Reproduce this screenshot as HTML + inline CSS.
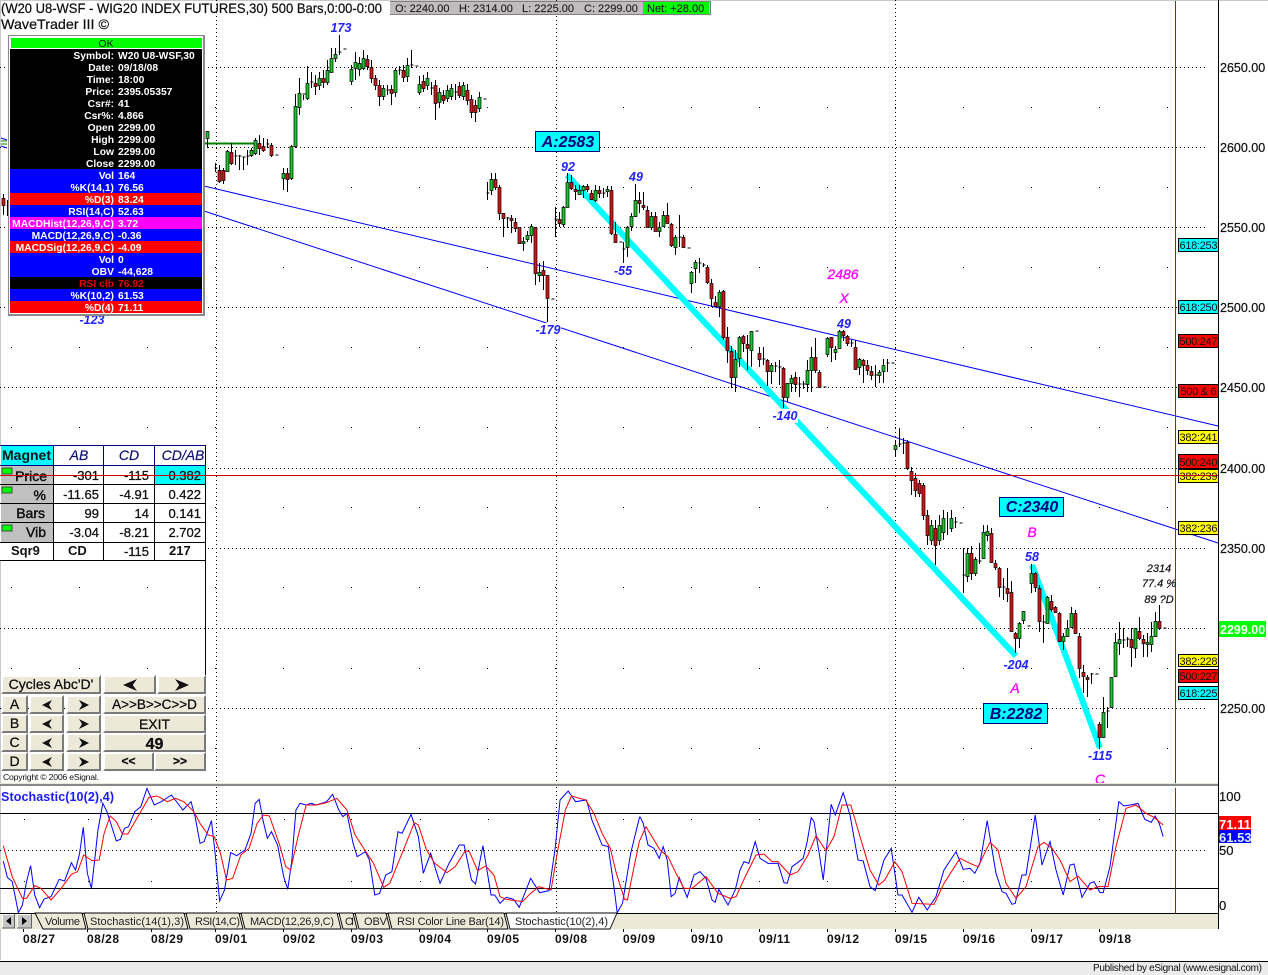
<!DOCTYPE html>
<html><head><meta charset="utf-8"><title>WaveTrader chart</title>
<style>
html,body{margin:0;padding:0;background:#fff;width:1268px;height:975px;overflow:hidden}
svg{position:absolute;left:0;top:0}
text{font-family:"Liberation Sans",Arial,sans-serif}
.b{position:absolute;box-sizing:border-box;background:#ece9d8;border:2px solid;border-color:#fff #7a7a7a #7a7a7a #fff;font:14px "Liberation Sans",Arial,sans-serif;color:#111;text-align:center;white-space:nowrap;-webkit-text-stroke:.3px #111}
.b svg{position:static;display:block;margin:0 auto}
.p text{font-size:10.3px;font-weight:bold;fill:#fff}
.lb{font-style:italic;font-size:12.5px;fill:#2222ff;text-anchor:middle;font-weight:bold}
.mg{font-style:italic;font-size:14px;fill:#ff00ff;stroke:#ff00ff;stroke-width:.3px;text-anchor:middle}
.ax{font-size:12.5px;fill:#111;stroke:#111;stroke-width:.2px}
.fb{font-size:11px;fill:#111;text-anchor:middle}
.d{font-size:12px;font-weight:bold;fill:#111}
.tb{font-size:11px;fill:#222}
.tv{font-size:13px;fill:#111;text-anchor:end;stroke:#111;stroke-width:.3px}
.tl{font-size:14px;fill:#111;text-anchor:end;stroke:#111;stroke-width:.45px}
.th{font-size:14px;font-style:italic;fill:#111177;stroke:#111177;stroke-width:.2px;text-anchor:middle}
.box{font-size:16px;font-weight:bold;font-style:italic;fill:#000080;text-anchor:middle}
.k{font-size:11px;font-style:italic;fill:#111;stroke:#111;stroke-width:.2px;text-anchor:middle}
</style></head><body>
<svg width="1268" height="975" viewBox="0 0 1268 975" xmlns="http://www.w3.org/2000/svg">
<rect width="1268" height="975" fill="#fff"/>
<rect width="1268" height="1" fill="#c8c8c8"/>
<rect width="1" height="960" fill="#c8c8c8"/>

<!-- grid -->
<path d="M0 67.5H1208M0 147.5H1208M0 227.5H1208M0 307.5H1208M0 387.5H1208M0 468.5H1208M0 548.5H1208M0 628.5H1208M0 708.5H1208" stroke="#000" stroke-dasharray="1 3" fill="none"/>
<path d="M216.5 0V784M556.5 0V784M895.5 0V784" stroke="#000" stroke-dasharray="1 3" fill="none"/>
<path d="M11 107.5H1170M11 187.5H1170M11 267.5H1170M11 347.5H1170M11 427.5H1170M11 507.5H1170M11 587.5H1170M11 668.5H1170M11 748.5H1170" stroke="#000" stroke-dasharray="1 67" fill="none"/>

<!-- trend lines -->
<path d="M204 186L1218 426M204 211L1218 543" stroke="#0000ff" fill="none"/>
<path d="M204 143.5H254" stroke="#008000" stroke-width="2" fill="none"/>
<path d="M1 141H7M1 144H7" stroke="#008000" fill="none"/><path d="M1 138L7 140M1 146L7 148" stroke="#0000ff" fill="none"/>

<!-- cyan wave lines -->
<path d="M567 175L1016 656M1032 565L1100 748" stroke="#00ffff" stroke-width="6" fill="none"/>
<rect x="772" y="409" width="26" height="14" fill="#fff"/>
<rect x="535" y="323" width="26" height="14" fill="#fff"/>

<!-- wicks -->
<g transform="translate(.5,0)"><path stroke="#000" fill="none" d="M3 194V215M7 200V216M207 131V148M215 163V172M214 168h3M219 165V183M223 168V184M227 150V172M231 143V165M235 150V165M234 156h3M239 155V170M238 156h3M243 157V170M242 157h3M247 150V165M246 156h3M251 148V157M255 138V155M259 135V155M263 138V152M267 139V148M266 144h3M271 143V157M275 155h3M283 168V190M287 168V192M291 145V180M295 94V148M299 78V115M303 95V100M302 94h3M307 66V100M311 72V88M310 82h3M315 75V95M319 72V90M323 70V88M327 60V85M331 48V72M335 48V62M339 35V55M338 52h3M343 49h3M351 65V85M355 52V80M359 57V76M363 50V70M367 55V70M371 60V83M375 75V90M379 80V106M383 85V100M387 85V95M386 90h3M391 85V105M395 68V97M399 66V75M398 70h3M403 65V82M407 58V82M411 50V68M410 65h3M415 66h3M419 76V95M423 75V92M427 72V90M431 82V95M430 88h3M435 80V120M439 88V108M443 90V104M447 85V102M451 84V100M455 84V100M454 92h3M459 82V98M463 82V100M467 84V105M471 95V118M475 100V122M479 92V112M483 99h3"/>
<path stroke="#000" fill="none" d="M487 182V200M486 193h3M491 173V195M495 173V190M499 185V220M503 213V237M507 217V228M506 218h3M511 215V233M515 218V232M519 228V243M523 237V251M527 231V242M531 224V243M535 227V285M539 263V282M543 261V290M547 275V322M551 299h3M555 207V237M554 219h3M559 212V227M563 206V227M567 173V207M571 175V190M575 185V200M579 185V195M583 185V198M587 184V192M591 190V200M595 185V202M599 186V198M603 188V198M602 193h3M607 186V197M611 186V235M615 222V242M619 242h3M623 242V263M622 249h3M627 226V257M631 213V231M635 184V217M639 192V213M643 192V210M647 206V227M651 212V230M655 212V231M659 222V237M663 211V227M667 203V223M671 223V247M675 235V255M679 215V247M678 237h3M683 235V248M687 248h3M691 271V293M695 260V283M699 258V273M698 263h3M703 263V267M702 265h3M707 265V284M711 279V307M715 296V307M719 290V317M723 290V340M727 327V363M731 346V388M735 350V392M739 336V367M743 335V352M747 335V370M751 331V367M755 331h3M759 347V367M763 347V365M762 359h3M767 359V386M771 363V384M775 362V372M774 366h3M779 360V385M778 367h3M783 367V408M787 383V402M791 375V392M795 372V392M799 377V397M798 384h3M803 381V389M802 384h3M807 360V392M811 347V392M815 338V373M819 370V387M823 387h3M827 337V357M831 337V362M835 346V360M839 330V349M843 330V341M847 335V346M851 340V347M850 343h3M855 340V370M859 358V375M863 359V383M867 360V375M871 366V380M875 365V387M874 375h3M879 370V383M883 359V383M887 359V372M886 363h3M891 363h3"/>
<path stroke="#000" fill="none" d="M895 440V457M899 428V447M898 444h3M903 438V454M902 443h3M907 440V470M911 467V495M915 473V497M919 480V497M923 483V520M927 510V545M931 520V545M935 520V565M939 515V545M943 510V540M947 512V535M951 510V532M955 517V528M954 522h3M959 523h3M963 548V593M962 575h3M967 548V582M971 546V580M975 557V576M979 543V564M978 561h3M983 525V559M987 525V541M991 528V563M995 560V570M999 567V597M1003 578V600M1002 587h3M1007 568V602M1011 581V632M1015 632V653M1019 622V648M1023 611V624M1027 626h3M1031 564V593M1035 572V592M1039 585V632M1043 615V643M1042 622h3M1047 596V623M1051 595V612M1055 606V613M1059 612V642M1063 633V650M1067 620V637M1071 607V628M1075 610V634M1079 633V678M1083 665V693M1087 675V697M1091 673V684M1090 674h3M1095 674h3M1099 722V748M1103 697V738M1107 707V728M1106 711h3M1111 677V708M1115 633V677M1119 622V655M1123 628V648M1122 640h3M1127 637V647M1126 639h3M1131 628V667M1135 628V658M1139 617V640M1143 635V657M1147 633V657M1151 622V652M1155 612V637M1159 605V630M1163 628h3"/></g>

<!-- green bodies -->
<g transform="translate(-1,.5)" stroke-width=".7"><path stroke="#000" fill="#11cc22" d="M207 131h3V138h-3zM227 151h3V171h-3zM251 150h3V155h-3zM255 140h3V153h-3zM283 173h3V178h-3zM291 146h3V178h-3zM295 106h3V146h-3zM299 93h3V107h-3zM307 83h3V98h-3zM319 78h3V85h-3zM327 70h3V82h-3zM331 58h3V72h-3zM335 54h3V58h-3zM351 69h3V81h-3zM355 62h3V68h-3zM359 63h3V69h-3zM363 58h3V68h-3zM383 88h3V96h-3zM395 70h3V92h-3zM407 65h3V76h-3zM419 84h3V92h-3zM427 78h3V85h-3zM439 92h3V102h-3zM447 90h3V98h-3zM451 88h3V96h-3zM463 85h3V96h-3zM479 97h3V108h-3zM491 179h3V190h-3zM523 241h3V243h-3zM527 235h3V239h-3zM531 226h3V235h-3zM539 272h3V275h-3zM563 207h3V224h-3zM567 182h3V207h-3zM579 190h3V194h-3zM583 186h3V190h-3zM595 190h3V200h-3zM607 189h3V191h-3zM627 227h3V247h-3zM631 216h3V226h-3zM635 200h3V216h-3zM651 216h3V227h-3zM659 227h3V231h-3zM663 215h3V226h-3zM675 237h3V247h-3zM691 272h3V283h-3zM695 262h3V268h-3zM719 292h3V306h-3zM735 359h3V377h-3zM739 337h3V358h-3zM751 331h3V350h-3zM771 365h3V371h-3zM787 383h3V397h-3zM791 378h3V383h-3zM807 370h3V384h-3zM811 357h3V370h-3zM827 338h3V354h-3zM835 349h3V352h-3zM839 331h3V348h-3zM859 359h3V367h-3zM879 372h3V375h-3zM883 365h3V371h-3zM895 445h3V449h-3zM931 525h3V540h-3zM939 525h3V540h-3zM943 518h3V532h-3zM951 518h3V528h-3zM967 553h3V576h-3zM975 559h3V573h-3zM983 532h3V558h-3zM987 531h3V535h-3zM1019 623h3V638h-3zM1023 611h3V620h-3zM1031 573h3V583h-3zM1047 597h3V623h-3zM1063 636h3V641h-3zM1067 628h3V636h-3zM1071 613h3V627h-3zM1103 712h3V737h-3zM1111 677h3V707h-3zM1115 642h3V676h-3zM1119 639h3V643h-3zM1135 628h3V648h-3zM1147 642h3V644h-3zM1151 636h3V644h-3zM1155 621h3V636h-3z"/>
<!-- red bodies -->
<path stroke="#000" fill="#dd1111" d="M3 198h3V205h-3zM219 170h3V181h-3zM223 170h3V180h-3zM231 152h3V163h-3zM259 143h3V148h-3zM263 146h3V150h-3zM271 145h3V155h-3zM287 173h3V179h-3zM315 83h3V86h-3zM323 78h3V82h-3zM367 59h3V66h-3zM371 67h3V78h-3zM375 78h3V85h-3zM379 85h3V96h-3zM391 89h3V93h-3zM403 70h3V77h-3zM423 81h3V88h-3zM435 85h3V103h-3zM443 95h3V100h-3zM459 86h3V95h-3zM467 90h3V100h-3zM471 99h3V112h-3zM475 105h3V112h-3zM495 179h3V187h-3zM499 187h3V213h-3zM503 213h3V218h-3zM511 218h3V220h-3zM515 222h3V228h-3zM519 227h3V243h-3zM535 227h3V273h-3zM543 270h3V275h-3zM547 275h3V298h-3zM559 219h3V223h-3zM571 182h3V188h-3zM575 189h3V191h-3zM587 186h3V189h-3zM591 193h3V199h-3zM599 190h3V193h-3zM611 190h3V233h-3zM615 234h3V242h-3zM639 200h3V203h-3zM643 205h3V207h-3zM647 210h3V227h-3zM655 216h3V231h-3zM667 215h3V223h-3zM671 224h3V245h-3zM683 237h3V247h-3zM707 267h3V282h-3zM711 283h3V298h-3zM715 302h3V306h-3zM723 291h3V337h-3zM727 337h3V350h-3zM731 351h3V377h-3zM743 336h3V343h-3zM747 344h3V348h-3zM759 353h3V359h-3zM767 360h3V371h-3zM783 368h3V397h-3zM795 377h3V384h-3zM815 357h3V370h-3zM819 372h3V387h-3zM831 337h3V347h-3zM843 331h3V335h-3zM847 336h3V343h-3zM855 347h3V369h-3zM863 360h3V365h-3zM867 365h3V370h-3zM871 371h3V375h-3zM907 442h3V468h-3zM911 471h3V480h-3zM915 478h3V490h-3zM919 483h3V493h-3zM923 485h3V515h-3zM927 515h3V535h-3zM935 528h3V545h-3zM971 553h3V573h-3zM991 533h3V562h-3zM995 563h3V567h-3zM999 568h3V587h-3zM1007 588h3V593h-3zM1011 592h3V631h-3zM1015 633h3V638h-3zM1035 573h3V587h-3zM1039 588h3V621h-3zM1051 601h3V609h-3zM1055 607h3V612h-3zM1059 613h3V641h-3zM1075 613h3V633h-3zM1079 636h3V668h-3zM1083 672h3V676h-3zM1087 677h3V679h-3zM1099 724h3V737h-3zM1131 639h3V647h-3zM1139 631h3V638h-3zM1143 639h3V643h-3zM1159 621h3V628h-3z"/></g>

<!-- horizontal red + vertical red -->
<path d="M0 475.5H1218" stroke="#cc0000" fill="none"/>
<path d="M1175.5 1V783M1175.5 788V913" stroke="#dd0000" fill="none"/>

<!-- wave labels -->
<text class="lb" x="341" y="32">173</text>
<text class="lb" x="92" y="324">-123</text>
<text class="lb" x="568" y="171">92</text>
<text class="lb" x="636" y="181">49</text>
<text class="lb" x="623" y="275">-55</text>
<text class="lb" x="548" y="334">-179</text>
<text class="lb" x="844" y="328">49</text>
<text class="lb" x="785" y="420">-140</text>
<text class="lb" x="1016" y="669">-204</text>
<text class="lb" x="1032" y="561">58</text>
<text class="lb" x="1100" y="760">-115</text>
<text class="mg" x="843" y="279">2486</text>
<text class="mg" x="844" y="303">X</text>
<text class="mg" x="1015" y="693">A</text>
<text class="mg" x="1032" y="537">B</text>
<text class="mg" x="1100" y="784">C</text>
<text class="k" x="1159" y="572">2314</text>
<text class="k" x="1159" y="587">77.4 %</text>
<text class="k" x="1159" y="603">89 ?D</text>

<!-- price boxes -->
<g stroke="#000080" stroke-width="1">
<rect x="535.5" y="131.5" width="64" height="20" fill="#00ffff"/>
<rect x="999.5" y="497.5" width="64" height="19" fill="#00ffff"/>
<rect x="983.5" y="703.5" width="64" height="20" fill="#00ffff"/></g>
<text class="box" x="568" y="147">A:2583</text>
<text class="box" x="1032" y="512">C:2340</text>
<text class="box" x="1016" y="719">B:2282</text>

<!-- axis -->
<path d="M1218.5 0V929" stroke="#000" fill="none"/>
<text class="ax" x="1220" y="72">2650.00</text>
<text class="ax" x="1220" y="152">2600.00</text>
<text class="ax" x="1220" y="232">2550.00</text>
<text class="ax" x="1220" y="312">2500.00</text>
<text class="ax" x="1220" y="392">2450.00</text>
<text class="ax" x="1220" y="473">2400.00</text>
<text class="ax" x="1220" y="553">2350.00</text>
<text class="ax" x="1220" y="713">2250.00</text>
<rect x="1219" y="621" width="47" height="16" fill="#00ff00"/>
<text x="1220" y="634" font-size="12.5" font-weight="bold" fill="#fff">2299.00</text>

<!-- fib tags -->
<g stroke="#000" stroke-width="1">
<rect x="1178.5" y="238.5" width="40" height="13" fill="#00ffff"/>
<rect x="1178.5" y="300.5" width="40" height="13" fill="#00ffff"/>
<rect x="1178.5" y="334.5" width="40" height="13" fill="#ff0000"/>
<rect x="1178.5" y="384.5" width="40" height="13" fill="#ff0000"/>
<rect x="1178.5" y="430.5" width="40" height="13" fill="#ffff00"/>
<rect x="1178.5" y="454.5" width="40" height="14" fill="#ff0000"/>
<rect x="1178.5" y="469.5" width="40" height="13" fill="#ffff00"/>
<rect x="1178.5" y="521.5" width="40" height="13" fill="#ffff00"/>
<rect x="1178.5" y="654.5" width="40" height="12" fill="#ffff00"/>
<rect x="1178.5" y="669.5" width="40" height="13" fill="#ff0000"/>
<rect x="1178.5" y="686.5" width="40" height="13" fill="#00ffff"/></g>
<text class="fb" x="1198.5" y="249" textLength="38">618:253</text>
<text class="fb" x="1198.5" y="311" textLength="38">618:250</text>
<text class="fb" x="1198.5" y="345" textLength="38">500:247</text>
<text class="fb" x="1198.5" y="395" textLength="36">500 &amp; 6</text>
<text class="fb" x="1198.5" y="441" textLength="38">382:241</text>
<text class="fb" x="1198.5" y="466" textLength="38">500:240</text>
<text class="fb" x="1198.5" y="480" textLength="38">382:239</text>
<text class="fb" x="1198.5" y="532" textLength="38">382:236</text>
<text class="fb" x="1198.5" y="665" textLength="38">382:228</text>
<text class="fb" x="1198.5" y="680" textLength="38">500:227</text>
<text class="fb" x="1198.5" y="697" textLength="38">618:225</text>
<path d="M1178 475.5H1218" stroke="#cc0000" fill="none"/>

<!-- header -->
<text x="1" y="13" font-size="14" fill="#111" stroke="#111" stroke-width=".25" textLength="381" lengthAdjust="spacingAndGlyphs">(W20 U8-WSF - WIG20 INDEX FUTURES,30) 500 Bars,0:00-0:00</text>
<text x="1" y="29" font-size="14" fill="#111" stroke="#111" stroke-width=".25" textLength="108" lengthAdjust="spacingAndGlyphs">WaveTrader III ©</text>
<rect x="390" y="1" width="321" height="14" fill="#808080"/>
<rect x="390" y="2" width="320" height="12" fill="#c0bcc0"/>
<rect x="643" y="2" width="66" height="12" fill="#00ff00"/>
<g font-size="11" fill="#222" stroke="#222" stroke-width=".15">
<text x="395" y="12">O: 2240.00</text>
<text x="459" y="12">H: 2314.00</text>
<text x="522" y="12">L: 2225.00</text>
<text x="584" y="12">C: 2299.00</text>
<text x="647" y="12">Net: +28.00</text></g>

<!-- data window -->
<rect x="8" y="35" width="197" height="281" fill="#8a8a8a"/>
<rect x="9" y="36" width="194" height="278" fill="#fff"/>
<rect x="11" y="38" width="191" height="10" fill="#00ff00"/>
<rect x="10" y="49" width="192" height="120" fill="#000"/>
<rect x="10" y="169" width="192" height="24" fill="#0000ff"/>
<rect x="10" y="193" width="192" height="12" fill="#ff0000"/>
<rect x="10" y="205" width="192" height="12" fill="#0000ff"/>
<rect x="10" y="217" width="192" height="12" fill="#ff00ff"/>
<rect x="10" y="229" width="192" height="12" fill="#0000ff"/>
<rect x="10" y="241" width="192" height="12" fill="#ff0000"/>
<rect x="10" y="253" width="192" height="24" fill="#0000ff"/>
<rect x="10" y="277" width="192" height="12" fill="#000"/>
<rect x="10" y="289" width="192" height="12" fill="#0000ff"/>
<rect x="10" y="301" width="192" height="12" fill="#ff0000"/>
<text x="106" y="47" font-size="10.5" fill="#002200" text-anchor="middle">OK</text>
<g class="p">
<g text-anchor="end">
<text x="114" y="59">Symbol:</text><text x="114" y="71">Date:</text><text x="114" y="83">Time:</text><text x="114" y="95">Price:</text><text x="114" y="107">Csr#:</text><text x="114" y="119">Csr%:</text><text x="114" y="131">Open</text><text x="114" y="143">High</text><text x="114" y="155">Low</text><text x="114" y="167">Close</text>
<text x="114" y="179">Vol</text><text x="114" y="191">%K(14,1)</text><text x="114" y="203">%D(3)</text><text x="114" y="215">RSI(14,C)</text><text x="114" y="227">MACDHist(12,26,9,C)</text><text x="114" y="239">MACD(12,26,9,C)</text><text x="114" y="251">MACDSig(12,26,9,C)</text><text x="114" y="263">Vol</text><text x="114" y="275">OBV</text><text x="114" y="287" style="fill:#e00000">RSI clb</text><text x="114" y="299">%K(10,2)</text><text x="114" y="311">%D(4)</text></g>
<text x="118" y="59">W20 U8-WSF,30</text><text x="118" y="71">09/18/08</text><text x="118" y="83">18:00</text><text x="118" y="95">2395.05357</text><text x="118" y="107">41</text><text x="118" y="119">4.866</text><text x="118" y="131">2299.00</text><text x="118" y="143">2299.00</text><text x="118" y="155">2299.00</text><text x="118" y="167">2299.00</text>
<text x="118" y="179">164</text><text x="118" y="191">76.56</text><text x="118" y="203">83.24</text><text x="118" y="215">52.63</text><text x="118" y="227">3.72</text><text x="118" y="239">-0.36</text><text x="118" y="251">-4.09</text><text x="118" y="263">0</text><text x="118" y="275">-44,628</text><text x="118" y="287" style="fill:#e00000">76.92</text><text x="118" y="299">61.53</text><text x="118" y="311">71.11</text>
</g>

<!-- magnet table -->
<rect x="0" y="445" width="206" height="116" fill="#fff"/>
<rect x="1" y="445" width="52" height="20" fill="#00ffff"/>
<rect x="1" y="465" width="52" height="77" fill="#c0c0c0"/>
<rect x="154" y="465" width="52" height="19" fill="#00ffff"/>
<rect x="2" y="468" width="10" height="6" fill="#00ff00" stroke="#333" stroke-width=".8"/>
<rect x="2" y="487" width="10" height="6" fill="#00ff00" stroke="#333" stroke-width=".8"/>
<rect x="2" y="525" width="10" height="6" fill="#00ff00" stroke="#333" stroke-width=".8"/>
<path d="M0 445.5H206M53.5 445V465M103.5 445V465M154.5 445V465M0 465.5H206" stroke="#000080" fill="none"/>
<path d="M0 484.5H206M0 503.5H206M0 522.5H206M0 542.5H206M0 560.5H206M53.5 465V561M103.5 465V561M154.5 465V561M205.5 445V675" stroke="#000" fill="none"/>
<text x="2" y="460" font-size="14" font-weight="bold" fill="#111">Magnet</text>
<text class="th" x="79" y="460">AB</text><text class="th" x="129" y="460">CD</text><text class="th" x="183" y="460">CD/AB</text>
<g class="tl"><text x="47" y="481">Price</text><text x="46" y="500">%</text><text x="45" y="518">Bars</text><text x="46" y="537">Vib</text></g>
<g class="tv">
<text x="99" y="480">-301</text><text x="149" y="480">-115</text><text x="201" y="480">0.382</text>
<text x="99" y="499">-11.65</text><text x="149" y="499">-4.91</text><text x="201" y="499">0.422</text>
<text x="99" y="518">99</text><text x="149" y="518">14</text><text x="201" y="518">0.141</text>
<text x="99" y="537">-3.04</text><text x="149" y="537">-8.21</text><text x="201" y="537">2.702</text>
<text x="149" y="556">-115</text>
</g>
<g font-size="13" font-weight="bold" fill="#111"><text x="11" y="555">Sqr9</text><text x="68" y="555">CD</text><text x="169" y="555">217</text></g>
<path d="M0 475.5H206" stroke="#cc0000" fill="none"/>
<text x="3" y="780" font-size="8.7" fill="#111" textLength="96">Copyright © 2006 eSignal.</text>

<!-- divider -->
<rect x="0" y="783" width="1218" height="1" fill="#eee6da"/>
<rect x="0" y="784" width="1218" height="2" fill="#888"/>

<!-- stochastic panel -->
<path d="M0 813.5H1218M0 888.5H1218M0 913.5H1218" stroke="#000" fill="none"/>
<path d="M0 850.5H1208" stroke="#000" stroke-dasharray="1 3" fill="none"/>
<path d="M216.5 787V913M556.5 787V913M895.5 787V913" stroke="#000" stroke-dasharray="1 3" fill="none"/>
<path d="M24 819.5h1M88 819.5h1M151 819.5h1M284 819.5h1M351 819.5h1M420 819.5h1M488 819.5h1M623 819.5h1M691 819.5h1M759 819.5h1M827 819.5h1M963 819.5h1M1031 819.5h1M1099 819.5h1M24 881.5h1M88 881.5h1M151 881.5h1M284 881.5h1M351 881.5h1M420 881.5h1M488 881.5h1M623 881.5h1M691 881.5h1M759 881.5h1M827 881.5h1M963 881.5h1M1031 881.5h1M1099 881.5h1" stroke="#000" fill="none"/>
<g transform="translate(0,780) scale(.4082,.3333)" fill="none" stroke-width="1">
<polyline stroke="#0000ff" vector-effect="non-scaling-stroke" points="8,243 18,292 30,305 45,398 55,375 65,305 75,257 85,345 97,383 108,357 125,350 145,298 158,303 175,248 185,270 195,220 204,142 214,280 224,325 232,240 240,150 252,70 262,95 285,183 295,178 305,145 315,140 330,95 345,80 360,25 378,75 395,65 420,45 448,90 468,65 478,110 490,190 500,185 518,122 527,220 538,363 550,330 565,218 580,227 600,210 615,160 625,70 635,58 645,125 655,175 665,155 680,195 695,290 705,328 715,240 725,90 735,70 750,75 762,70 775,75 800,65 815,43 830,90 840,110 850,100 865,190 875,230 895,215 905,240 918,345 930,340 945,285 960,275 975,155 985,160 1007,103 1025,170 1037,280 1055,220 1078,310 1100,250 1125,195 1137,195 1155,300 1165,312 1183,197 1203,345 1212,345 1225,370 1240,352 1258,358 1272,382 1300,295 1322,338 1345,332 1360,205 1372,60 1392,33 1410,65 1437,60 1450,120 1460,150 1475,195 1490,200 1505,330 1512,398 1525,370 1545,220 1567,110"/>
<polyline stroke="#ff0000" vector-effect="non-scaling-stroke" points="8,197 30,290 55,355 65,355 85,317 100,325 125,360 150,325 175,283 190,275 205,225 225,242 243,240 255,160 270,108 285,125 300,162 313,162 340,105 365,52 385,48 410,65 430,55 450,65 475,95 490,130 510,165 525,170 540,220 555,300 570,295 590,225 610,205 630,130 645,105 660,108 685,195 700,260 712,270 730,170 750,75 775,75 800,68 825,55 850,90 870,165 900,222 915,250 940,322 955,310 985,220 1015,128 1025,135 1045,210 1065,250 1095,278 1115,260 1140,212 1150,215 1170,272 1190,258 1210,285 1225,350 1240,358 1280,365 1300,340 1320,320 1350,330 1365,220 1385,90 1400,48 1435,60 1455,100 1475,160 1495,205 1510,280 1530,358 1537,360 1550,280 1567,180"/>
</g>
<g transform="translate(640,780) scale(.4,.3333)" fill="none" stroke-width="1">
<polyline stroke="#0000ff" vector-effect="non-scaling-stroke" points="0,110 8,130 20,195 35,205 48,235 58,200 68,240 78,350 88,340 98,293 118,352 135,285 150,275 165,295 180,360 188,367 197,328 220,375 238,330 250,270 260,245 272,250 288,185 300,235 320,250 345,250 360,308 368,310 380,260 395,247 408,235 418,185 428,113 435,125 450,235 458,300 478,73 488,105 508,38 525,105 545,240 558,243 575,320 588,332 610,240 628,205 645,345 655,345 680,397 697,352 718,390 740,350 760,270 790,215 808,268 825,265 837,280 850,250 868,122 890,280 905,335 915,340 930,373 938,370 955,285 965,285 988,105 1005,255 1025,185 1040,270 1058,345 1075,255 1085,252 1105,352 1125,310 1135,305 1150,338 1158,338 1175,260 1197,65 1210,78 1225,75 1245,70 1262,118 1278,127 1288,108 1298,130 1308,170"/>
<polyline stroke="#ff0000" vector-effect="non-scaling-stroke" points="0,180 15,140 30,170 50,210 70,230 90,280 110,325 130,325 165,290 195,340 225,355 240,350 265,285 290,225 310,222 330,245 345,245 375,285 395,275 420,225 440,167 465,212 485,170 505,75 527,75 550,170 575,270 597,315 612,300 637,245 655,275 680,370 735,373 760,310 800,235 825,250 845,260 875,187 895,210 915,310 940,355 965,320 995,200 1010,187 1030,205 1050,240 1075,305 1095,288 1125,330 1145,320 1170,320 1190,200 1215,85 1240,75 1265,100 1285,112 1308,135"/>
</g>
<text x="1" y="801" font-size="12.5" font-weight="bold" fill="#1a1aff" textLength="113">Stochastic(10(2),4)</text>
<g font-size="13" fill="#111" stroke="#111" stroke-width=".2"><text x="1219" y="801">100</text><text x="1219" y="855">50</text><text x="1219" y="910">0</text></g>
<rect x="1219" y="816" width="32" height="14" fill="#ff0000"/>
<rect x="1219" y="830" width="32" height="13" fill="#0000ff"/>
<text x="1219" y="829" font-size="13" font-weight="bold" fill="#fff">71.11</text>
<text x="1219" y="842" font-size="13" font-weight="bold" fill="#dfe8ff">61.53</text>

<!-- tab strip -->
<rect x="0" y="914" width="1218" height="15" fill="#ece9d8"/>
<rect x="2" y="914" width="13" height="14" fill="#c4c4c4"/>
<rect x="17" y="914" width="15" height="14" fill="#c4c4c4"/>
<path d="M2.5 928V914.5H15M17.5 928V914.5H32" stroke="#fff" fill="none"/>
<path d="M14.5 914V928H2M31.5 914V928H17" stroke="#666" fill="none"/>
<path d="M6 921L11 917V925zM27 921L22 917V925z" fill="#000"/>
<g fill="#ece9d8" stroke="#000" stroke-width=".9">
<polygon points="35,913 43,929 86,929 82,913"/>
<polygon points="84,913 88,929 188,929 184,913"/>
<polygon points="186,913 190,929 243,929 239,913"/>
<polygon points="241,913 245,929 341,929 337,913"/>
<polygon points="339,913 343,929 357,929 353,913"/>
<polygon points="355,913 359,929 390,929 386,913"/>
<polygon points="388,913 392,929 508,929 504,913"/>
<polygon points="506,913 510,929 610,929 617,913" fill="#fff"/>
</g>
<g class="tb">
<text x="45" y="925" textLength="35">Volume</text>
<text x="90" y="925" textLength="94">Stochastic(14(1),3)</text>
<text x="195" y="925" textLength="45">RSI(14,C)</text>
<text x="250" y="925" textLength="84">MACD(12,26,9,C)</text>
<text x="345" y="925" textLength="9">OI</text>
<text x="364" y="925" textLength="23">OBV</text>
<text x="397" y="925" textLength="107">RSI Color Line Bar(14)</text>
<text x="515" y="925" textLength="93">Stochastic(10(2),4)</text>
</g>
<path d="M1218.5 913V929" stroke="#000" fill="none"/>
<path d="M23.5 929v3M87.5 929v3M151.5 929v3M215.5 929v3M283.5 929v3M351.5 929v3M419.5 929v3M487.5 929v3M555.5 929v3M623.5 929v3M691.5 929v3M759.5 929v3M827.5 929v3M895.5 929v3M963.5 929v3M1031.5 929v3M1099.5 929v3" stroke="#000" fill="none"/>

<!-- dates -->
<g class="d">
<text x="23" y="943" textLength="32">08/27</text><text x="87" y="943" textLength="32">08/28</text><text x="151" y="943" textLength="32">08/29</text><text x="215" y="943" textLength="32">09/01</text><text x="283" y="943" textLength="32">09/02</text><text x="351" y="943" textLength="32">09/03</text><text x="419" y="943" textLength="32">09/04</text><text x="487" y="943" textLength="32">09/05</text><text x="555" y="943" textLength="32">09/08</text><text x="623" y="943" textLength="32">09/09</text><text x="691" y="943" textLength="32">09/10</text><text x="759" y="943" textLength="31">09/11</text><text x="827" y="943" textLength="32">09/12</text><text x="895" y="943" textLength="32">09/15</text><text x="963" y="943" textLength="32">09/16</text><text x="1031" y="943" textLength="32">09/17</text><text x="1099" y="943" textLength="32">09/18</text>
</g>

<!-- status bar -->
<rect x="0" y="961" width="1268" height="1" fill="#000"/>
<rect x="0" y="962" width="1268" height="13" fill="#ebebeb"/>
<text x="1093" y="971" font-size="10" fill="#111" textLength="169">Published by eSignal (www.esignal.com)</text>
</svg>

<!-- cycle buttons -->
<div class="b" style="left:1px;top:675px;width:100px;height:19px;line-height:15px">Cycles Abc'D'</div>
<div class="b" style="left:103px;top:675px;width:53px;height:19px;padding-top:2px"><svg width="14" height="12" viewBox="0 0 10 10" preserveAspectRatio="none"><path d="M0 5L10 0L7 5L10 10z" fill="#111"/></svg></div>
<div class="b" style="left:157px;top:675px;width:49px;height:19px;padding-top:2px"><svg width="14" height="12" viewBox="0 0 10 10" preserveAspectRatio="none"><path d="M10 5L0 0L3 5L0 10z" fill="#111"/></svg></div>

<div class="b" style="left:1px;top:695px;width:27px;height:19px;line-height:15px">A</div>
<div class="b" style="left:29px;top:695px;width:35px;height:19px;padding-top:3px"><svg width="10" height="10" viewBox="0 0 10 10"><path d="M0 5L10 0L7 5L10 10z" fill="#111"/></svg></div>
<div class="b" style="left:66px;top:695px;width:35px;height:19px;padding-top:3px"><svg width="10" height="10" viewBox="0 0 10 10"><path d="M10 5L0 0L3 5L0 10z" fill="#111"/></svg></div>
<div class="b" style="left:103px;top:695px;width:103px;height:19px;line-height:16px;font-size:13.5px">A&gt;&gt;B&gt;&gt;C&gt;&gt;D</div>

<div class="b" style="left:1px;top:714px;width:27px;height:19px;line-height:15px">B</div>
<div class="b" style="left:29px;top:714px;width:35px;height:19px;padding-top:3px"><svg width="10" height="10" viewBox="0 0 10 10"><path d="M0 5L10 0L7 5L10 10z" fill="#111"/></svg></div>
<div class="b" style="left:66px;top:714px;width:35px;height:19px;padding-top:3px"><svg width="10" height="10" viewBox="0 0 10 10"><path d="M10 5L0 0L3 5L0 10z" fill="#111"/></svg></div>
<div class="b" style="left:103px;top:714px;width:103px;height:19px;line-height:16px">EXIT</div>

<div class="b" style="left:1px;top:733px;width:27px;height:19px;line-height:15px">C</div>
<div class="b" style="left:29px;top:733px;width:35px;height:19px;padding-top:3px"><svg width="10" height="10" viewBox="0 0 10 10"><path d="M0 5L10 0L7 5L10 10z" fill="#111"/></svg></div>
<div class="b" style="left:66px;top:733px;width:35px;height:19px;padding-top:3px"><svg width="10" height="10" viewBox="0 0 10 10"><path d="M10 5L0 0L3 5L0 10z" fill="#111"/></svg></div>
<div class="b" style="left:103px;top:733px;width:103px;height:19px;line-height:19px;font-weight:bold;font-size:16px">49</div>

<div class="b" style="left:1px;top:752px;width:27px;height:19px;line-height:15px">D</div>
<div class="b" style="left:29px;top:752px;width:35px;height:19px;padding-top:3px"><svg width="10" height="10" viewBox="0 0 10 10"><path d="M0 5L10 0L7 5L10 10z" fill="#111"/></svg></div>
<div class="b" style="left:66px;top:752px;width:35px;height:19px;padding-top:3px"><svg width="10" height="10" viewBox="0 0 10 10"><path d="M10 5L0 0L3 5L0 10z" fill="#111"/></svg></div>
<div class="b" style="left:103px;top:752px;width:51px;height:19px;line-height:15px;font-weight:bold;font-size:12px">&lt;&lt;</div>
<div class="b" style="left:154px;top:752px;width:52px;height:19px;line-height:15px;font-weight:bold;font-size:12px">&gt;&gt;</div>
</body></html>
